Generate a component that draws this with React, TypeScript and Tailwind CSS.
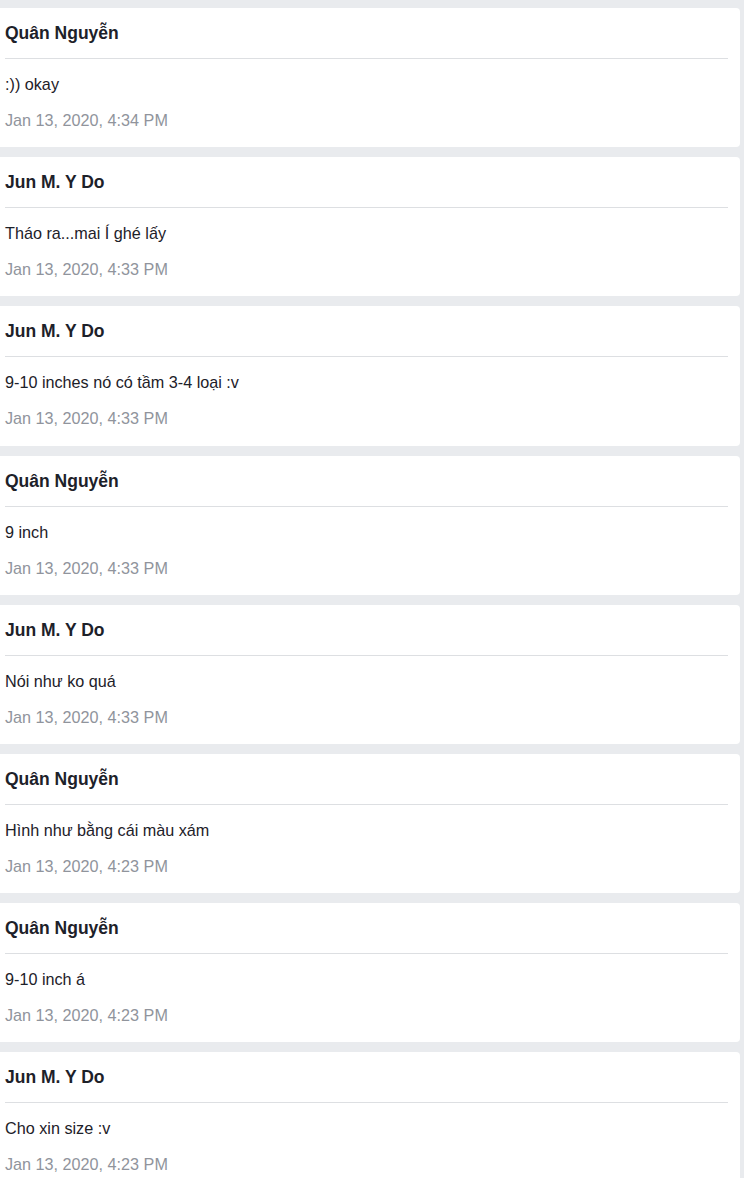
const messages = [
  { name: "Quân Nguyễn", text: ":)) okay", time: "Jan 13, 2020, 4:34 PM" },
  { name: "Jun M. Y Do", text: "Tháo ra...mai Í ghé lấy", time: "Jan 13, 2020, 4:33 PM" },
  { name: "Jun M. Y Do", text: "9-10 inches nó có tầm 3-4 loại :v", time: "Jan 13, 2020, 4:33 PM" },
  { name: "Quân Nguyễn", text: "9 inch", time: "Jan 13, 2020, 4:33 PM" },
  { name: "Jun M. Y Do", text: "Nói như ko quá", time: "Jan 13, 2020, 4:33 PM" },
  { name: "Quân Nguyễn", text: "Hình như bằng cái màu xám", time: "Jan 13, 2020, 4:23 PM" },
  { name: "Quân Nguyễn", text: "9-10 inch á", time: "Jan 13, 2020, 4:23 PM" },
  { name: "Jun M. Y Do", text: "Cho xin size :v", time: "Jan 13, 2020, 4:23 PM" },
]

function MessageCard({ name, text, time }: { name: string; text: string; time: string }) {
  return (
    <div className="bg-white rounded-r-[4px] pl-[5px] h-[139.2px] shrink-0">
      <div className="pt-[15px] pb-[15px]">
        <p className="text-[17.5px] leading-[20px] font-bold text-[#1d2129]">{name}</p>
      </div>
      <div className="h-px bg-[#dddfe2] mr-[12px]" />
      <p className="pt-[15px] text-[16.2px] leading-[20px] text-[#1d2129]">{text}</p>
      <p className="pt-[16px] text-[16.2px] leading-[20px] text-[#90949c]">{time}</p>
    </div>
  )
}

export default function App() {
  return (
    <div
      className="min-h-screen h-[1178px] overflow-hidden bg-[#e9ebee] pt-[8px] pr-[4px] flex flex-col gap-[10px]"
      style={{ fontFamily: '"Liberation Sans", Arial, sans-serif' }}
    >
      {messages.map((m, i) => (
        <MessageCard key={i} name={m.name} text={m.text} time={m.time} />
      ))}
    </div>
  )
}
